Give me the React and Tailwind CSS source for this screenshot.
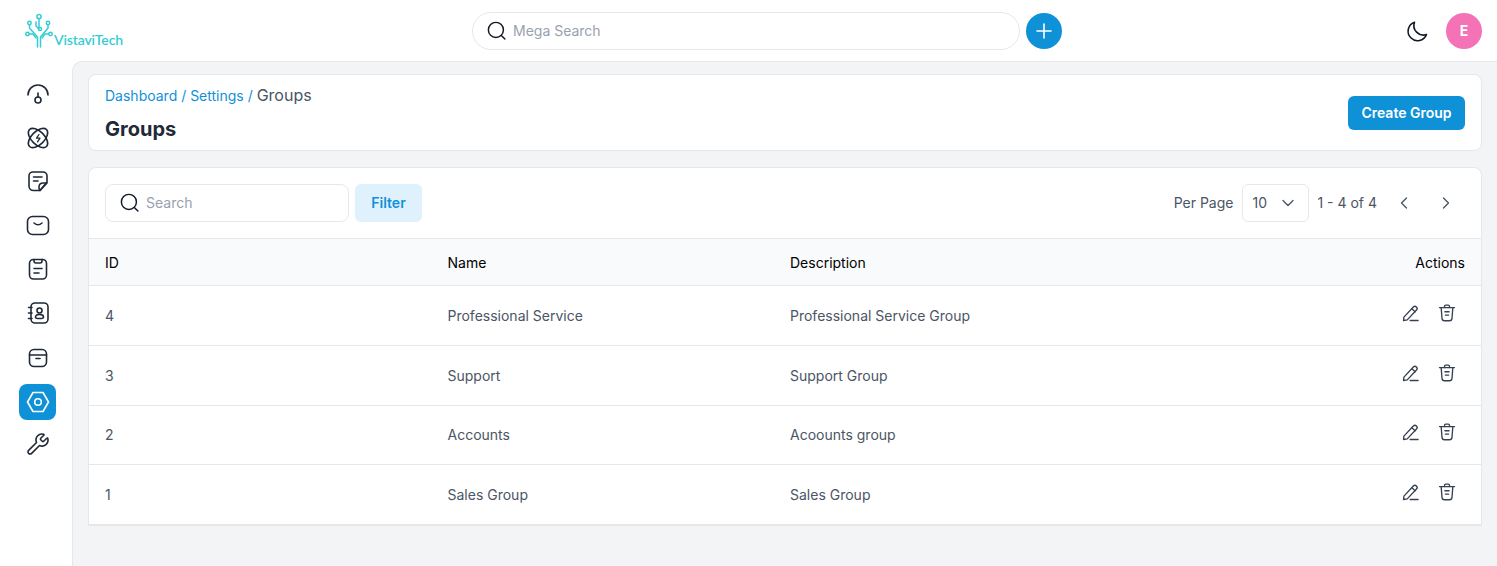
import React from 'react';
import { ChevronDown, ChevronLeft, ChevronRight, Plus, Wrench } from 'lucide-react';

const stroke = { fill: 'none', stroke: 'currentColor', strokeWidth: 1.6, strokeLinecap: 'round', strokeLinejoin: 'round' };

const Icon = ({ size = 24, className = '', children }) => (
  <svg width={size} height={size} viewBox="0 0 24 24" className={className} {...stroke}>{children}</svg>
);

const SearchIcon = () => (
  <Icon size={22} className="text-[#111827] shrink-0">
    <circle cx="10.800" cy="10.800" r="8.200" />
    <path d="M17 17.200 L20.600 20.800" />
  </Icon>
);

const navIcons = [
  <><path d="M2 13 A10 10 0 0 1 22 13" /><path d="M12 11v4" /><circle cx="12" cy="18" r="3" /></>,
  <><ellipse cx="12" cy="12" rx="12" ry="6.500" transform="rotate(45 12 12)" /><ellipse cx="12" cy="12" rx="12" ry="6.500" transform="rotate(-45 12 12)" /><path d="M13 8.500 10.500 12.200h3.500L11.500 15.800" strokeWidth="1.300" /></>,
  <g transform="translate(0 -1)"><path d="M21 13V7a4 4 0 0 0-4-4H7a4 4 0 0 0-4 4v10a4.500 4.500 0 0 0 4.500 4.500H14z" /><path d="M21 14l-7 7.500c-1-1-1.200-2.500-1-4 .3-2 2-3.500 4-3.500z" /><path d="M7.500 8h8.500M7.500 12h4.500" /></g>,
  <g transform="translate(0 -1)"><rect x="1.500" y="3.500" width="21" height="18" rx="5" /><path d="M8 10c2.500 2.200 5.500 2.200 8 0" /></g>,
  <g transform="translate(0 -1)"><rect x="3.500" y="2.500" width="17" height="19.500" rx="4" /><path d="M8 2.500v1.500a2 2 0 0 0 2 2h4a2 2 0 0 0 2-2V2.500" /><path d="M8 11.500h8M8 16h5" /></g>,
  <g transform="translate(0 -1)"><rect x="5" y="2" width="17" height="20" rx="4" /><circle cx="13.500" cy="9.500" r="2.500" /><path d="M9.500 16.200c0-1.800 1.500-2.800 4-2.800s4 1 4 2.800-8 1.800-8 0z" /><path d="M2.500 6.500h3.500M2.500 12h3.500M2.500 17.500h3.500" /></g>,
  <><rect x="3.500" y="3.500" width="17" height="17" rx="4.500" /><path d="M3.500 9h17" /><path d="M10 12.500h4" /></>,
];

const rows = [
  ['4', 'Professional Service', 'Professional Service Group', 'h-[60px] pt-[1px]'],
  ['3', 'Support', 'Support Group', 'h-[60px] pt-[1px]'],
  ['2', 'Accounts', 'Acoounts group', 'h-[59px]'],
  ['1', 'Sales Group', 'Sales Group', 'h-[60px] pt-[1px]'],
];

const Logo = () => (
  <div className="flex items-end w-[100px] h-[38px]">
    <svg width="32" height="38" viewBox="0 0 32 38" className="text-[#35cdd3] shrink-0 -mt-[1px]" fill="none" stroke="currentColor" strokeWidth="1.500" strokeLinecap="round" strokeLinejoin="round">
      <circle cx="14" cy="4.500" r="2.100" />
      <circle cx="4.500" cy="11" r="1.700" />
      <circle cx="23" cy="11" r="1.700" />
      <circle cx="2.500" cy="22" r="1.700" />
      <circle cx="25.500" cy="22" r="1.700" />
      <circle cx="15" cy="17" r="1.600" />
      <path d="M14 7v8M11 10v4l3 3" />
      <path d="M4.500 13v3l8 9v10" />
      <path d="M23 13v3l-7.500 9v10" />
      <path d="M4.500 22H8l3 4" />
      <path d="M23.500 22H20l-3 4" />
    </svg>
    <span className="text-[14px] font-semibold leading-none tracking-[-0.15px] text-[#35cdd3] pb-[3px] -ml-[3px] font-['Lato',sans-serif]">VistaviTech</span>
  </div>
);

export default function App() {
  return (
    <div className="w-[1497px] h-[566px] overflow-hidden bg-white flex flex-col font-['Inter',sans-serif]">
      {/* Header */}
      <header className="h-[61px] pt-[1px] shrink-0 flex items-center relative">
        <div className="w-[447px] pl-[25px] shrink-0"><Logo /></div>
        <div className="w-[548px] h-[38px] ml-[25px] rounded-full border border-gray-200 flex items-center pl-[13px] gap-[5px]">
          <SearchIcon />
          <span className="text-sm text-gray-400">Mega Search</span>
        </div>
        <button className="w-9 h-9 ml-[6px] rounded-full bg-[#0f91d8] text-white flex items-center justify-center">
          <Plus size={24} strokeWidth={1.600} />
        </button>
        <div className="ml-auto flex items-center pr-[15px]">
          <Icon size={24} className="text-[#111827] mr-[16px]">
            <path d="M20.500 15.500A9.500 9.500 0 0 1 8.500 3.200a9.500 9.500 0 1 0 12 12.300z" />
          </Icon>
          <div className="w-9 h-9 rounded-full bg-[#f472b6] text-white text-sm font-bold flex items-center justify-center">E</div>
        </div>
      </header>

      <div className="flex-1 flex min-h-0">
        {/* Sidebar */}
        <aside className="w-[72px] shrink-0 flex flex-col items-center pl-[3px] pt-[15px]">
          {navIcons.map((icon, i) => (
            <div key={i} className="w-[37px] h-[36px] mb-[8px] flex items-center justify-center text-[#1f2937]">
              <Icon>{icon}</Icon>
            </div>
          ))}
          <div className="w-[37px] h-[36px] mb-[6px] rounded-lg bg-[#0f91d8] text-white flex items-center justify-center">
            <Icon>
              <path d="M7 2.500h10l5.500 9.500-5.500 9.500H7L1.500 12z" />
              <circle cx="12" cy="12" r="3.300" />
            </Icon>
          </div>
          <div className="w-[37px] h-[36px] flex items-center justify-center text-[#1f2937]">
            <Wrench size={24} strokeWidth={1.600} />
          </div>
        </aside>

        {/* Main */}
        <main className="flex-1 bg-[#f3f4f6] rounded-tl-[10px] border-l border-t border-gray-200 pt-3 pl-[15px] pr-[15px]">
          <div className="h-[77px] bg-white rounded-lg border border-gray-200 px-4 flex items-center justify-between">
            <div>
              <div className="text-sm leading-5 text-[#0f91d8]">
                Dashboard / Settings / <span className="text-base text-gray-600">Groups</span>
              </div>
              <h1 className="text-xl font-bold leading-7 text-[#1f2937] mt-[8px]">Groups</h1>
            </div>
            <button className="h-[34px] w-[117px] rounded-md bg-[#0f91d8] text-white text-sm font-semibold">Create Group</button>
          </div>

          <div className="mt-4 h-[359px] bg-white rounded-t-lg border border-gray-200 overflow-hidden">
            <div className="h-[71px] pb-[1px] px-4 flex items-center justify-between border-b border-gray-200">
              <div className="flex items-center gap-[6px]">
                <div className="w-[244px] h-[38px] rounded-lg border border-gray-200 flex items-center pl-[13px] gap-[5px]">
                  <SearchIcon />
                  <span className="text-sm text-gray-400">Search</span>
                </div>
                <button className="w-[67px] h-[38px] rounded-md bg-[#dff1fc] text-[#0f91d8] text-sm font-semibold">Filter</button>
              </div>
              <div className="flex items-center text-sm text-gray-600 pr-[10px]">
                <span className="mr-[9px] mt-[1px]">Per Page</span>
                <div className="w-[67px] h-[38px] rounded-md border border-gray-200 flex items-center justify-between pl-[9px] pr-[10px]">
                  <span>10</span>
                  <ChevronDown size={20} strokeWidth={1.600} />
                </div>
                <span className="ml-2 mr-[17px]">1 - 4 of 4</span>
                <ChevronLeft size={20} strokeWidth={1.600} className="mr-[22px]" />
                <ChevronRight size={20} strokeWidth={1.600} className="-mr-[1px]" />
              </div>
            </div>

            <div className="h-[47px] pt-[2px] px-4 grid grid-cols-[342.500px_342.500px_1fr_auto] items-center bg-[#f9fafb] border-b border-gray-200 text-sm text-black">
              <span>ID</span>
              <span>Name</span>
              <span>Description</span>
              <span>Actions</span>
            </div>
            {rows.map(([id, name, desc, h]) => (
              <div key={id} className={`${h} px-4 grid grid-cols-[342.500px_342.500px_1fr_auto] items-center border-b border-gray-200 text-sm text-gray-600`}>
                <span>{id}</span>
                <span>{name}</span>
                <span>{desc}</span>
                <div className="flex items-center gap-[16px] pr-[8px] text-[#374151] -mt-[6px]">
                  <Icon size={20}>
                    <path d="M3.500 17 14.800 4.800a2.600 2.600 0 0 1 3.800 3.600L7.500 20.200l-4.500.8z" />
                    <path d="M13 7l4 3.500" />
                    <path d="M11 21h9.500" />
                  </Icon>
                  <Icon size={20}>
                    <path d="M3 5.500h18" />
                    <path d="M9 5.500V4a1.500 1.500 0 0 1 1.500-1.500h3A1.500 1.500 0 0 1 15 4v1.500" />
                    <path d="M5 5.500l1 13a3 3 0 0 0 3 2.800h6a3 3 0 0 0 3-2.800l1-13" />
                    <path d="M9.500 10.500h5M10 14.500h4" />
                  </Icon>
                </div>
              </div>
            ))}
          </div>
        </main>
      </div>
    </div>
  );
}
